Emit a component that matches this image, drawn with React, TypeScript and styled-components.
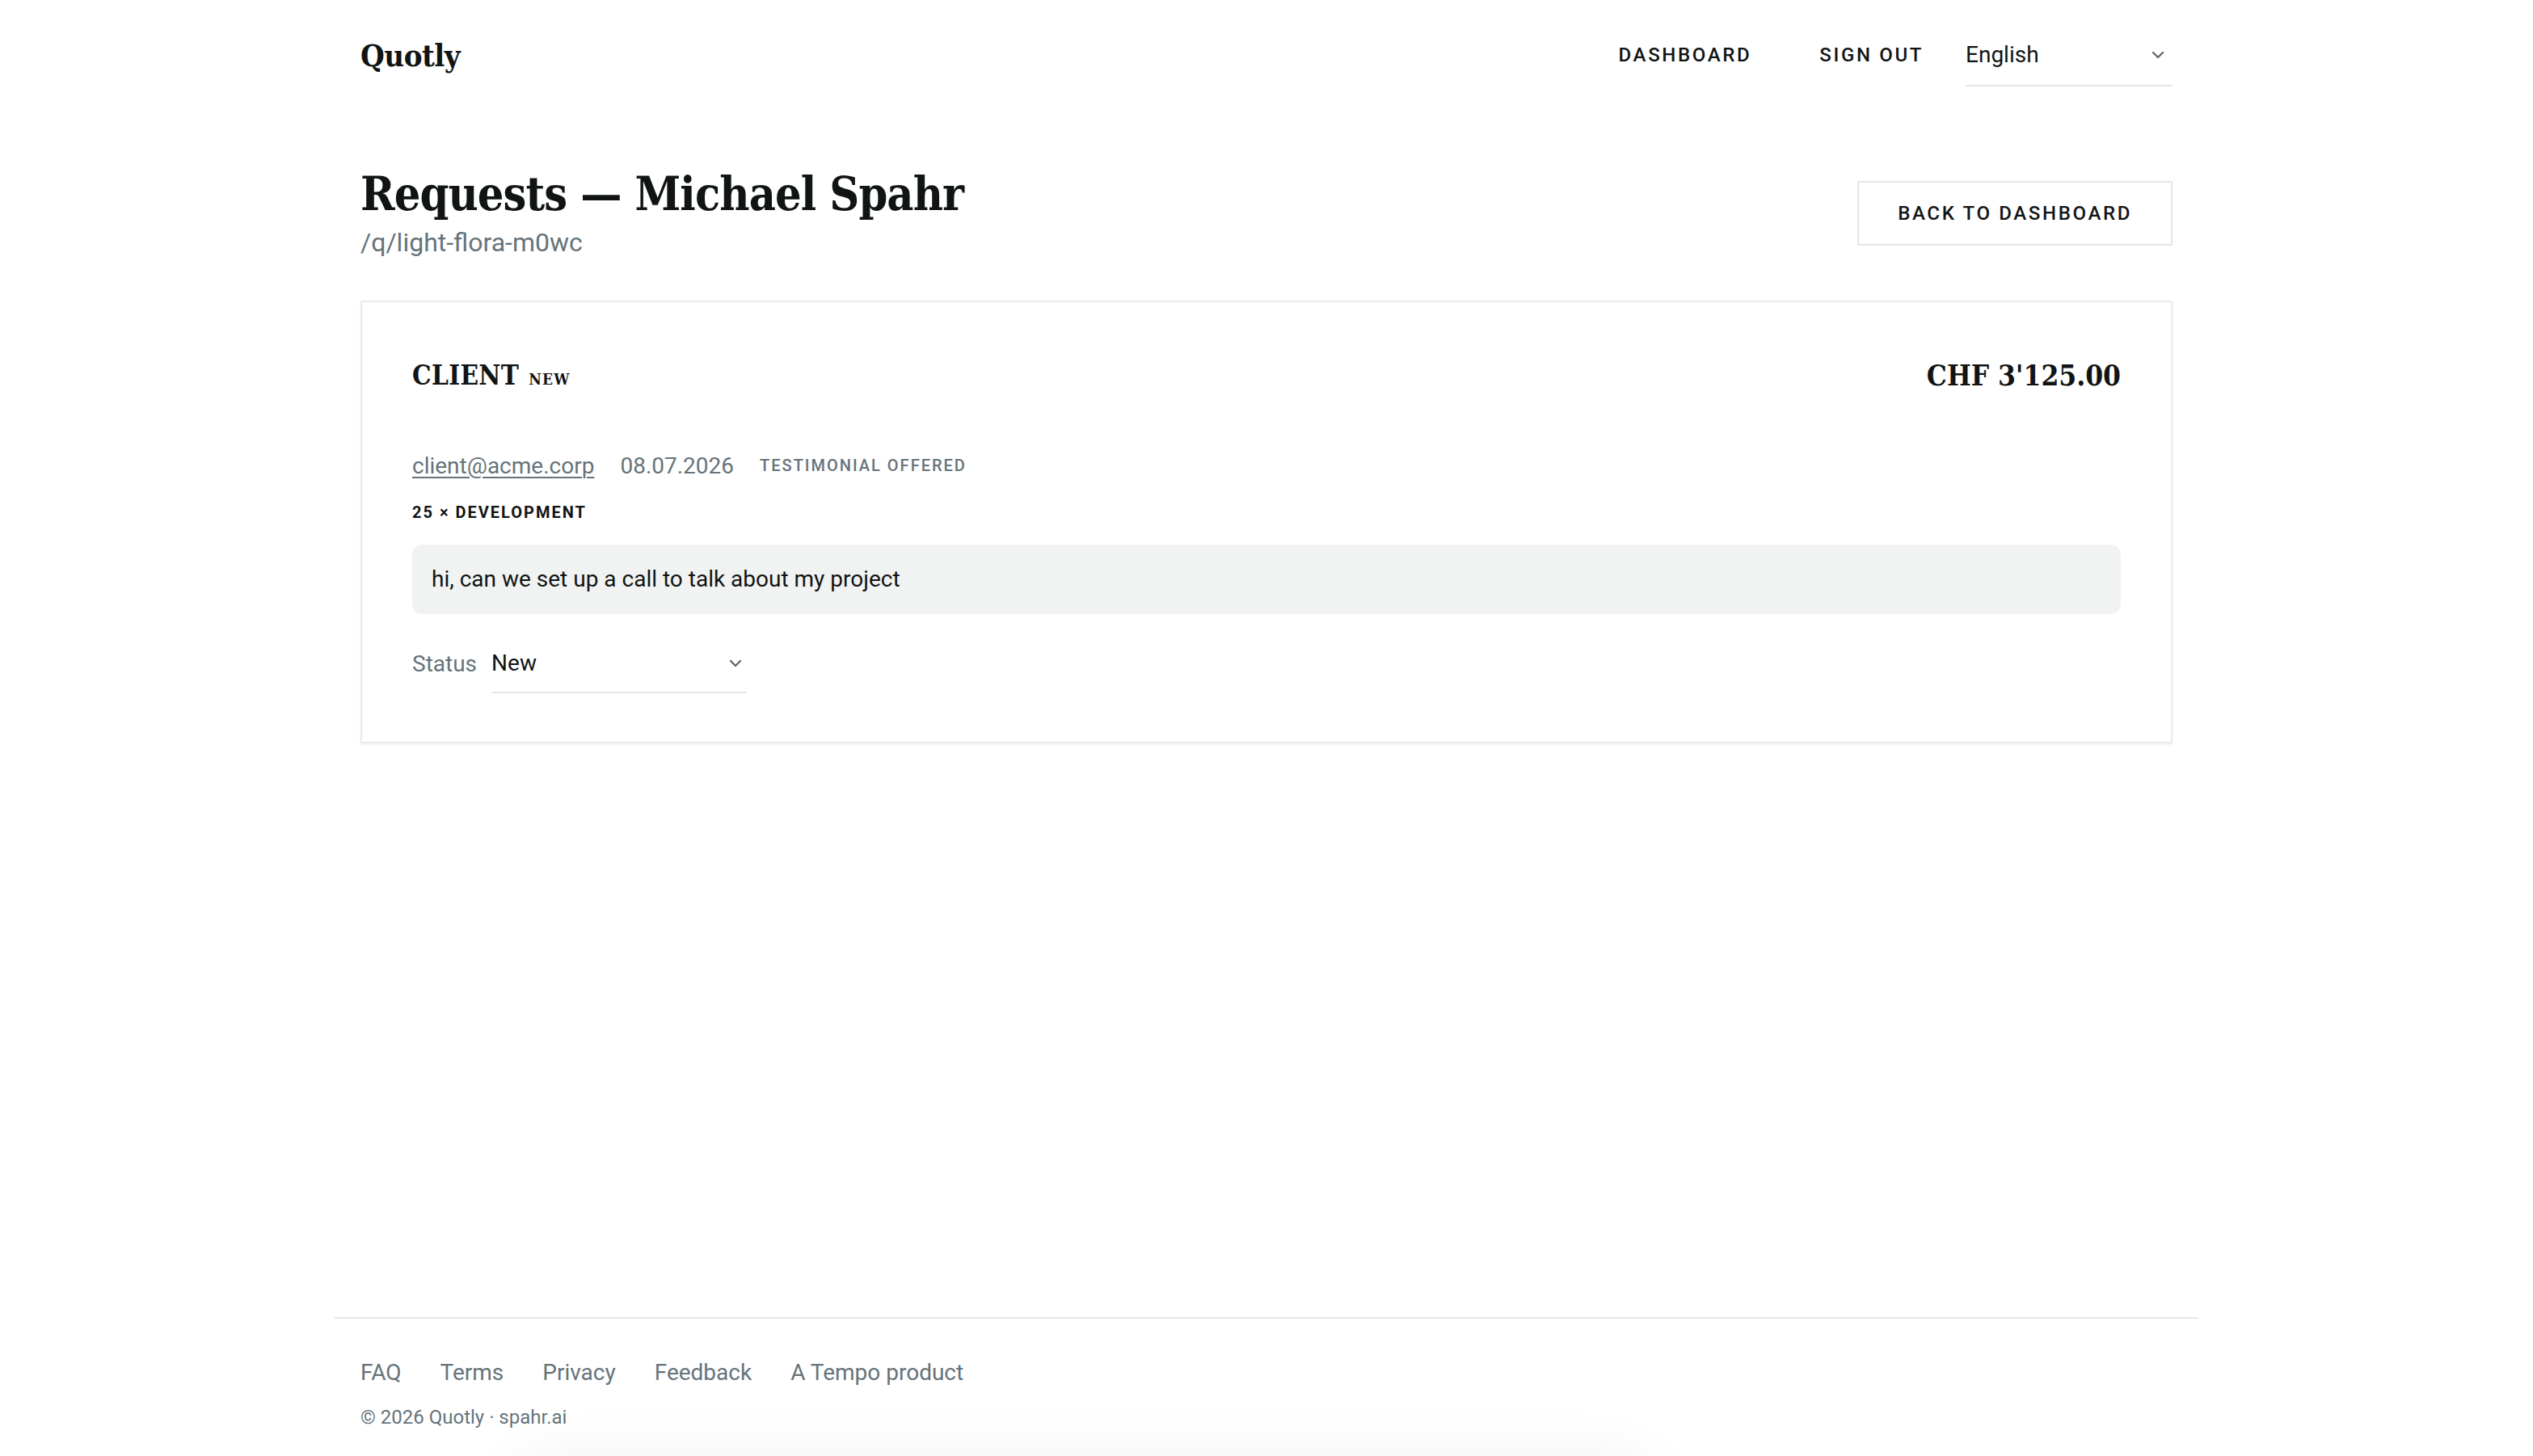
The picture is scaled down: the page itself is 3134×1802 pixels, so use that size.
import React from "react";
import styled, { createGlobalStyle } from "styled-components";

const GlobalStyle = createGlobalStyle`
  html, body { margin: 0; padding: 0; background: #ffffff; }
  body {
    font-family: Roboto, "Liberation Sans", Arial, sans-serif;
    color: #111414;
    -webkit-font-smoothing: antialiased;
  }
  * { box-sizing: border-box; }
`;

const SLAB = `"DejaVu Serif", "Liberation Serif", serif`;
const GREY = "#66737a";

const Page = styled.div`
  min-height: 100vh;
  display: flex;
  flex-direction: column;
  overflow: hidden;
`;

const Container = styled.div`
  width: 100%;
  max-width: 2306px;
  margin: 0 auto;
  padding: 0 32px;
`;

const Header = styled.header`
  height: 136px;
  display: flex;
  align-items: center;
  justify-content: space-between;
`;

const Logo = styled.a`
  font-family: ${SLAB};
  font-stretch: condensed;
  font-weight: 700;
  font-size: 38px;
  color: #111414;
  text-decoration: none;
  letter-spacing: -0.5px;
`;

const Nav = styled.nav`
  display: flex;
  align-items: center;
`;

const NavLink = styled.a<{ $gap?: number }>`
  font-family: Roboto, sans-serif;
  font-weight: 500;
  font-size: 24px;
  letter-spacing: 0.11em;
  text-transform: uppercase;
  color: #111414;
  text-decoration: none;
  margin-right: ${(p) => p.$gap ?? 0}px;
`;

const SelectWrap = styled.div<{ $width: number }>`
  position: relative;
  width: ${(p) => p.$width}px;
`;

const Select = styled.select<{ $height: number }>`
  appearance: none;
  -webkit-appearance: none;
  width: 100%;
  height: ${(p) => p.$height}px;
  border: none;
  border-bottom: 2px solid #e4e5e5;
  background: transparent;
  padding: 0 40px 0 0;
  font-family: Roboto, sans-serif;
  font-size: 28px;
  color: #111414;
  outline: none;
  border-radius: 0;
`;

const Chevron = styled.svg<{ $right: number }>`
  position: absolute;
  right: ${(p) => p.$right}px;
  top: 50%;
  transform: translateY(-50%);
  width: 16px;
  height: 10px;
  pointer-events: none;
`;

const Main = styled.main`
  flex: 1;
`;

const TitleRow = styled.div`
  display: flex;
  align-items: flex-start;
  justify-content: space-between;
  padding-top: 64px;
`;

const TitleBlock = styled.div`
  display: flex;
  flex-direction: column;
`;

const Title = styled.h1`
  margin: 0;
  font-family: ${SLAB};
  font-stretch: condensed;
  font-weight: 700;
  font-size: 57px;
  line-height: 80px;
  color: #111414;
  letter-spacing: -0.9px;
`;

const Slug = styled.div`
  font-size: 32px;
  line-height: 40px;
  color: ${GREY};
`;

const OutlineButton = styled.button`
  margin-top: 24px;
  height: 80px;
  padding: 0 48px;
  background: #ffffff;
  border: 2px solid #e4e5e5;
  font-family: Roboto, sans-serif;
  font-weight: 500;
  font-size: 24px;
  letter-spacing: 0.11em;
  text-transform: uppercase;
  color: #111414;
  cursor: pointer;
`;

const Card = styled.section`
  margin-top: 52px;
  border: 2px solid #e9eaea;
  box-shadow: 0 2px 3px rgba(0, 0, 0, 0.06);
  padding: 64px 62px 60px;
  background: #fff;
`;

const CardTop = styled.div`
  display: flex;
  align-items: center;
  justify-content: space-between;
  height: 52px;
`;

const ClientName = styled.div`
  display: flex;
  align-items: baseline;
  gap: 12px;
`;

const ClientLabel = styled.span`
  font-family: ${SLAB};
  font-stretch: condensed;
  font-weight: 700;
  font-size: 33px;
  letter-spacing: 0.01em;
  color: #111414;
`;

const Badge = styled.span`
  font-family: ${SLAB};
  font-stretch: condensed;
  font-weight: 700;
  font-size: 19px;
  letter-spacing: 0.06em;
  color: #111414;
`;

const Amount = styled.div`
  font-family: ${SLAB};
  font-stretch: condensed;
  font-weight: 700;
  font-size: 35px;
  color: #111414;
`;

const MetaRow = styled.div`
  display: flex;
  align-items: center;
  gap: 32px;
  margin-top: 66px;
  height: 40px;
`;

const Email = styled.a`
  font-size: 28px;
  color: ${GREY};
  text-decoration: underline;
  text-underline-offset: 4px;
  text-decoration-thickness: 2px;
`;

const DateText = styled.span`
  font-size: 28px;
  color: ${GREY};
`;

const Tag = styled.span<{ $dark?: boolean }>`
  font-size: 20px;
  font-weight: ${(p) => (p.$dark ? 700 : 500)};
  letter-spacing: 0.1em;
  text-transform: uppercase;
  color: ${(p) => (p.$dark ? "#111414" : GREY)};
`;

const ItemLine = styled.div`
  margin-top: 24px;
  height: 28px;
  display: flex;
  align-items: center;
`;

const Message = styled.div`
  margin-top: 26px;
  background: #f1f3f2;
  border-radius: 12px;
  padding: 24px;
  font-size: 28px;
  line-height: 38px;
  color: #111414;
`;

const StatusRow = styled.div`
  margin-top: 24px;
  display: flex;
  align-items: center;
  gap: 18px;
`;

const StatusLabel = styled.span`
  font-size: 28px;
  color: ${GREY};
`;

const Footer = styled.footer`
  width: 100%;
  max-width: 2306px;
  margin: 0 auto;
  border-top: 2px solid #e6e7e7;
  padding: 46px 32px 32px;
`;

const FooterLinks = styled.div`
  display: flex;
  gap: 48px;
  height: 40px;
  align-items: center;
`;

const FooterLink = styled.a`
  font-size: 28px;
  color: ${GREY};
  text-decoration: none;
`;

const Copyright = styled.div`
  margin-top: 20px;
  font-size: 24px;
  line-height: 32px;
  color: ${GREY};
`;

const ToastShadow = styled.div`
  position: fixed;
  left: 660px;
  width: 1360px;
  top: 1830px;
  height: 120px;
  border-radius: 24px;
  background: #fff;
  box-shadow: 0 0 80px 20px rgba(0, 0, 0, 0.07);
`;

const ChevronIcon = ({ right }: { right: number }) => (
  <Chevron $right={right} viewBox="0 0 16 10" fill="none">
    <path d="M2 2 L8 8 L14 2" stroke="#5f6b6e" strokeWidth="2.4" strokeLinecap="round" strokeLinejoin="round" />
  </Chevron>
);

export default function App() {
  return (
    <>
      <GlobalStyle />
      <Page>
        <Container>
          <Header>
            <Logo href="#">Quotly</Logo>
            <Nav>
              <NavLink href="#" $gap={84}>Dashboard</NavLink>
              <NavLink href="#" $gap={52}>Sign out</NavLink>
              <SelectWrap $width={256}>
                <Select $height={78} defaultValue="en">
                  <option value="en">English</option>
                  <option value="de">Deutsch</option>
                </Select>
                <ChevronIcon right={10} />
              </SelectWrap>
            </Nav>
          </Header>
        </Container>
        <Main>
          <Container>
            <TitleRow>
              <TitleBlock>
                <Title>Requests — Michael Spahr</Title>
                <Slug>/q/light-flora-m0wc</Slug>
              </TitleBlock>
              <OutlineButton>Back to dashboard</OutlineButton>
            </TitleRow>
            <Card>
              <CardTop>
                <ClientName>
                  <ClientLabel>CLIENT</ClientLabel>
                  <Badge>NEW</Badge>
                </ClientName>
                <Amount>CHF 3'125.00</Amount>
              </CardTop>
              <MetaRow>
                <Email href="#">client@acme.corp</Email>
                <DateText>08.07.2026</DateText>
                <Tag>Testimonial offered</Tag>
              </MetaRow>
              <ItemLine>
                <Tag $dark>25 × Development</Tag>
              </ItemLine>
              <Message>hi, can we set up a call to talk about my project</Message>
              <StatusRow>
                <StatusLabel>Status</StatusLabel>
                <SelectWrap $width={316}>
                  <Select $height={74} defaultValue="new">
                    <option value="new">New</option>
                    <option value="contacted">Contacted</option>
                    <option value="won">Won</option>
                  </Select>
                  <ChevronIcon right={6} />
                </SelectWrap>
              </StatusRow>
            </Card>
          </Container>
        </Main>
        <Footer>
          <FooterLinks>
            <FooterLink href="#">FAQ</FooterLink>
            <FooterLink href="#">Terms</FooterLink>
            <FooterLink href="#">Privacy</FooterLink>
            <FooterLink href="#">Feedback</FooterLink>
            <FooterLink href="#">A Tempo product</FooterLink>
          </FooterLinks>
          <Copyright>© 2026 Quotly · spahr.ai</Copyright>
        </Footer>
        <ToastShadow />
      </Page>
    </>
  );
}
